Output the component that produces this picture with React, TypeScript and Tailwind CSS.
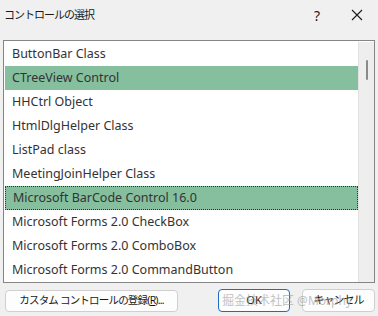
const items = [
  "ButtonBar Class",
  "CTreeView Control",
  "HHCtrl Object",
  "HtmlDlgHelper Class",
  "ListPad class",
  "MeetingJoinHelper Class",
  "Microsoft BarCode Control 16.0",
  "Microsoft Forms 2.0 CheckBox",
  "Microsoft Forms 2.0 ComboBox",
  "Microsoft Forms 2.0 CommandButton",
];

const selected = [1, 6];
const focused = 6;

export default function App() {
  return (
    <div className="w-[378px] h-[316px] bg-[#f0f0f0] text-[#1a1a1a] font-['Noto_Sans','Noto_Sans_CJK_JP',sans-serif] relative overflow-hidden">
      {/* title bar */}
      <div className="h-[30px] flex items-center pl-[4px] text-[11px]">
        <span className="flex-1 tracking-[-1px]">コントロールの選択</span>
        <span className="w-[20px] text-center text-[14px] mr-[24px]">?</span>
        <svg width="12" height="12" viewBox="0 0 12 12" className="mr-[15px]">
          <path d="M1 1 L11 11 M11 1 L1 11" stroke="#1a1a1a" strokeWidth="1.1" />
        </svg>
      </div>

      {/* list box */}
      <div className="mx-[3px] mt-[10px] h-[243px] border border-[#858585] bg-white flex">
        <div className="flex-1 pl-[1px] pt-[1px] overflow-hidden">
          {items.map((name, i) => (
            <div
              key={name}
              className={
                "h-[24px] flex items-center pl-[7px] text-[12.5px] text-[#333] whitespace-nowrap " +
                (selected.includes(i) ? "bg-[#85bf9e] " : "") +
                (i === focused ? "border border-dotted border-[#333] pl-[6px]" : "")
              }
            >
              {name}
            </div>
          ))}
        </div>
        <div className="w-[16px] bg-[#eeeeee] border-l border-[#e2e2e2] mt-[1px] flex justify-center">
          <div className="w-[2px] h-[20px] mt-[18px] bg-[#8a8a8a] rounded-full" />
        </div>
      </div>

      {/* buttons */}
      <div className="flex items-center mt-[6px] pl-[5px] pr-[3px] text-[11px] whitespace-nowrap">
        <button className="h-[22px] w-[173px] border border-[#cfcfcf] rounded-[4px] bg-[#fdfdfd] text-[#1a1a1a] text-[10.5px] tracking-[-0.8px]">
          カスタム コントロールの登録(<span className="underline">R</span>)...
        </button>
        <div className="flex-1" />
        <button className="h-[23px] w-[72px] border border-[#1a6fc4] rounded-[4px] bg-[#fdfdfd] mr-[12px]">
          OK
        </button>
        <button className="h-[23px] w-[73px] border border-[#cfcfcf] rounded-[4px] bg-[#fdfdfd] tracking-[-1px]">
          キャンセル
        </button>
      </div>

      {/* watermark */}
      <div className="absolute left-[222px] top-[292px] text-[12px] text-[#9a9a9a] opacity-60 whitespace-nowrap pointer-events-none">
        掘金技术社区 @Morphy
      </div>
    </div>
  );
}
